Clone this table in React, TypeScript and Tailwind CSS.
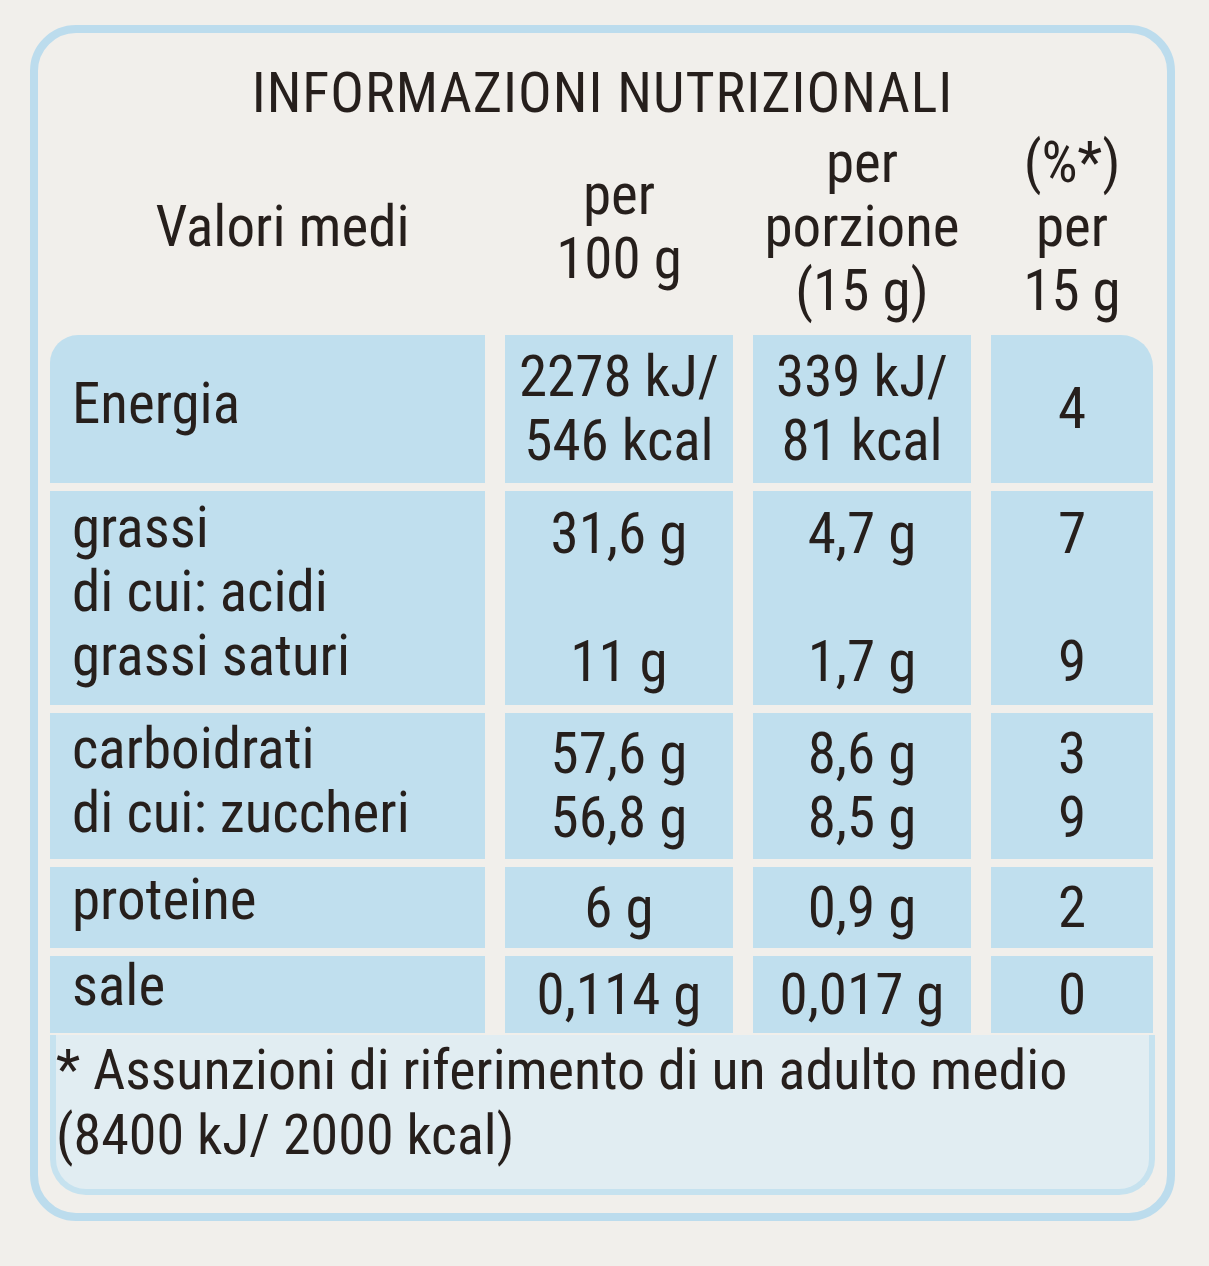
type Row = {
  label: string[];
  per100: string[];
  perPortion: string[];
  pct: string[];
  height: string;
  labelPad: string;
};

const rows: Row[] = [
  { label: ['Energia'], per100: ['2278 kJ/', '546 kcal'], perPortion: ['339 kJ/', '81 kcal'], pct: ['4'], height: 'h-[148px]', labelPad: 'pb-[10px]' },
  {
    label: ['grassi', 'di cui: acidi', 'grassi saturi'],
    per100: ['31,6 g', '', '11 g'],
    perPortion: ['4,7 g', '', '1,7 g'],
    pct: ['7', '', '9'],
    height: 'h-[214px]',
    labelPad: 'pb-[12px]',
  },
  {
    label: ['carboidrati', 'di cui: zuccheri'],
    per100: ['57,6 g', '56,8 g'],
    perPortion: ['8,6 g', '8,5 g'],
    pct: ['3', '9'],
    height: 'h-[146px]',
    labelPad: 'pb-[10px]',
  },
  { label: ['proteine'], per100: ['6 g'], perPortion: ['0,9 g'], pct: ['2'], height: 'h-[81px]', labelPad: 'pb-[16px]' },
  { label: ['sale'], per100: ['0,114 g'], perPortion: ['0,017 g'], pct: ['0'], height: 'h-[77px]', labelPad: 'pb-[18px]' },
];

function Lines({ lines }: { lines: string[] }) {
  return (
    <div>
      {lines.map((l, i) => (
        <div key={i} className="whitespace-nowrap">
          {l || '\u00a0'}
        </div>
      ))}
    </div>
  );
}

export default function App() {
  return (
    <div
      className="min-h-[1266px] bg-[#f1efeb] pt-[25px] pl-[30px] text-[#261f1c]"
      style={{ fontFamily: "'Roboto Condensed', Roboto, 'Liberation Sans', sans-serif" }}
    >
      <div className="w-[1145px] h-[1196px] rounded-[46px] border-[8px] border-[#bcdced] px-[12px] pt-[30px]">
        <h1 className="text-center text-[56px] leading-[60px] tracking-[1px]">INFORMAZIONI NUTRIZIONALI</h1>

        {/* Header */}
        <div className="mt-[8px] grid h-[192px] grid-cols-[435px_228px_218px_162px] items-center gap-x-[20px] text-center text-[57px] leading-[64px]">
          <div className="pl-[30px]">Valori medi</div>
          <Lines lines={['per', '100 g']} />
          <Lines lines={['per', 'porzione', '(15 g)']} />
          <Lines lines={['(%*)', 'per', '15 g']} />
        </div>

        {/* Table */}
        <div className="mt-[12px] grid grid-cols-[435px_228px_218px_162px] gap-x-[20px] gap-y-[8px] text-[57px] leading-[64px]">
          {rows.map((r, i) => (
            <div key={i} className="contents">
              <div className={`${r.height} ${r.labelPad} flex items-center bg-[#c0dfee] pl-[22px] ${i === 0 ? 'rounded-tl-[28px]' : ''}`}>
                <Lines lines={r.label} />
              </div>
              <div className={`${r.height} flex items-center justify-center bg-[#c0dfee] text-center`}>
                <Lines lines={r.per100} />
              </div>
              <div className={`${r.height} flex items-center justify-center bg-[#c0dfee] text-center`}>
                <Lines lines={r.perPortion} />
              </div>
              <div className={`${r.height} flex items-center justify-center bg-[#c0dfee] text-center ${i === 0 ? 'rounded-tr-[32px]' : ''}`}>
                <Lines lines={r.pct} />
              </div>
            </div>
          ))}
        </div>

        {/* Footnote */}
        <div className="mt-[2px] h-[160px] rounded-b-[36px] border-[6px] border-t-0 border-[#c6e2ef] bg-[#e1edf2] pt-[3px] text-[56px] leading-[65px]">
          <div>* Assunzioni di riferimento di un adulto medio</div>
          <div>(8400 kJ/ 2000 kcal)</div>
        </div>
      </div>
    </div>
  );
}
